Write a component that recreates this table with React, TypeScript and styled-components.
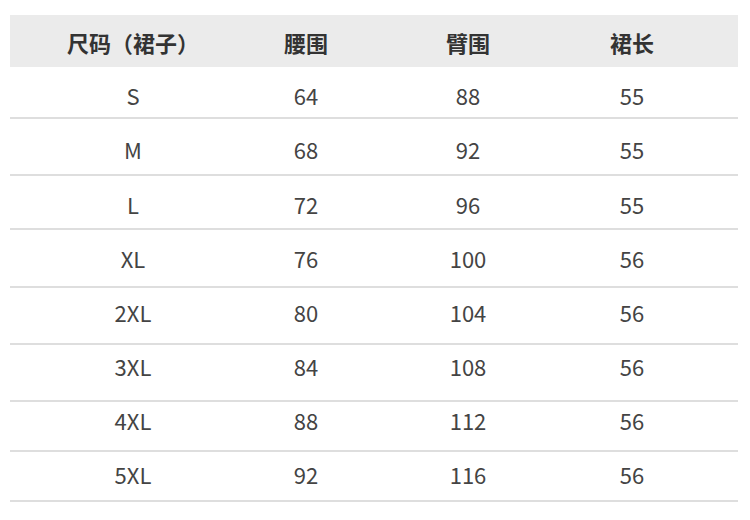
import styled, { createGlobalStyle } from "styled-components";

const GlobalStyle = createGlobalStyle`
  body {
    margin: 0;
    background: #fff;
    font-family: "Noto Sans CJK SC", "Noto Sans", sans-serif;
  }
`;

type Row = {
  size: string;
  waist: number;
  arm: number;
  length: number;
  h: number;
  offset: number;
};

const rows: Row[] = [
  { size: "S", waist: 64, arm: 88, length: 55, h: 52, offset: 13 },
  { size: "M", waist: 68, arm: 92, length: 55, h: 57, offset: 15 },
  { size: "L", waist: 72, arm: 96, length: 55, h: 54, offset: 13 },
  { size: "XL", waist: 76, arm: 100, length: 56, h: 58, offset: 13 },
  { size: "2XL", waist: 80, arm: 104, length: 56, h: 57, offset: 9 },
  { size: "3XL", waist: 84, arm: 108, length: 56, h: 57, offset: 6 },
  { size: "4XL", waist: 88, arm: 112, length: 56, h: 50, offset: 3 },
  { size: "5XL", waist: 92, arm: 116, length: 56, h: 50, offset: 7 },
];

export default function App() {
  return (
    <>
      <GlobalStyle />
      <Page>
        <Table>
          <HeaderRow>
            <HeadCell>尺码（裙子）</HeadCell>
            <HeadCell>腰围</HeadCell>
            <HeadCell>臂围</HeadCell>
            <HeadCell>裙长</HeadCell>
          </HeaderRow>
          {rows.map((r) => (
            <BodyRow key={r.size} $h={r.h} $offset={r.offset}>
              <Cell>{r.size}</Cell>
              <Cell>{r.waist}</Cell>
              <Cell>{r.arm}</Cell>
              <Cell>{r.length}</Cell>
            </BodyRow>
          ))}
        </Table>
      </Page>
    </>
  );
}

const Page = styled.div`
  width: 750px;
  height: 520px;
  padding: 15px 12px 0 10px;
  box-sizing: border-box;
`;

const Table = styled.div`
  display: flex;
  flex-direction: column;
  width: 728px;
`;

const columns = "246px 100px 224px 104px";

const HeaderRow = styled.div`
  display: grid;
  grid-template-columns: ${columns};
  height: 52px;
  padding-top: 2px;
  box-sizing: border-box;
  align-items: center;
  background: #ebebeb;
`;

const HeadCell = styled.div`
  text-align: center;
  font-size: 22px;
  font-weight: 700;
  color: #333;
  white-space: nowrap;
`;

const BodyRow = styled.div<{ $h: number; $offset: number }>`
  display: grid;
  grid-template-columns: ${columns};
  align-items: start;
  height: ${(p) => p.$h}px;
  padding-top: ${(p) => p.$offset}px;
  box-sizing: border-box;
  border-bottom: 2px solid #dedede;
`;

const Cell = styled.div`
  text-align: center;
  font-size: 22px;
  line-height: 30px;
  color: #444;
`;
